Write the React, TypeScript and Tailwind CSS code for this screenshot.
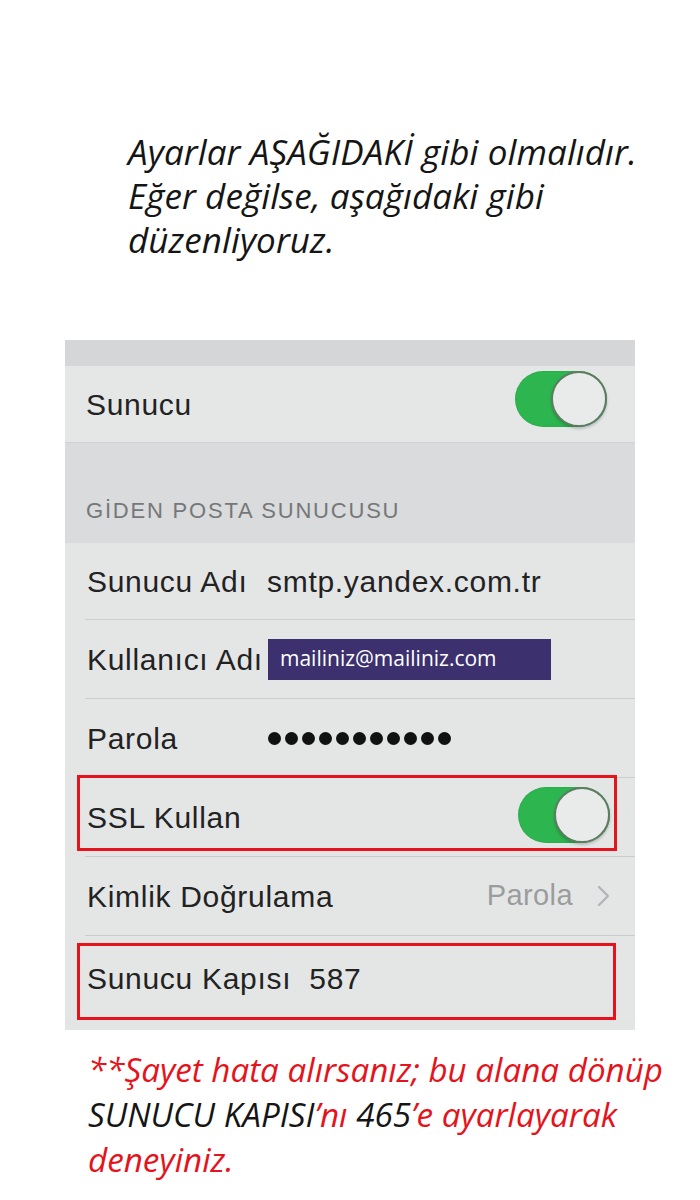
import React from "react";

const rowText = "font-['Liberation_Sans',Arial,sans-serif] text-[30px] tracking-[0.7px] text-[#222222]";

function Toggle() {
  return (
    <div className="flex h-[56px] w-[92px] justify-end rounded-full bg-[#2db64f] shadow-[inset_0_0_2px_rgba(0,0,0,0.15)]">
      <div className="h-[56px] w-[56px] rounded-full border-[2px] border-[#5d7d63] bg-[#e8ebea] shadow-[0_2px_3px_rgba(0,0,0,0.2)]" />
    </div>
  );
}

function Chevron() {
  return (
    <svg width="13" height="22" viewBox="0 0 13 22" fill="none">
      <path d="M2 2 L11 11 L2 20" stroke="#b3b5b6" strokeWidth="2.4" strokeLinecap="round" strokeLinejoin="round" />
    </svg>
  );
}

function Row({
  children,
  height = "h-[79px]",
  divider = true,
  highlight,
}: {
  children: React.ReactNode;
  height?: string;
  divider?: boolean;
  highlight?: string;
}) {
  return (
    <div className="relative">
      <div
        className={`ml-[20px] flex items-center pl-[2px] ${height} ${
          divider ? "border-b border-[#cbcdce]" : ""
        }`}
      >
        {children}
      </div>
      {highlight && <div className={`pointer-events-none absolute border-[3px] border-[#e5131b] ${highlight}`} />}
    </div>
  );
}

export default function App() {
  return (
    <div className="h-[1200px] w-[700px] overflow-hidden bg-white">
      {/* intro note */}
      <div className="pl-[128px] pt-[130px] font-['Open_Sans',sans-serif] text-[35px] italic leading-[44px] tracking-[0.1px] text-[#151515]">
        <p>Ayarlar AŞAĞIDAKİ gibi olmalıdır.</p>
        <p>Eğer değilse, aşağıdaki gibi</p>
        <p>düzenliyoruz.</p>
      </div>

      {/* settings screen */}
      <div className="ml-[65px] mt-[78px] h-[690px] w-[570px] overflow-hidden bg-[#e3e5e5]">
        <div className="h-[26px] bg-[#d4d6d7]" />
        <div className="flex h-[77px] items-center justify-between border-b border-[#cfd1d2] bg-[#e5e7e7] pl-[21px] pr-[28px]">
          <span className={rowText}>Sunucu</span>
          <div className="-mt-[10px]">
            <Toggle />
          </div>
        </div>
        <div className="flex h-[100px] items-end bg-[#d9dbdc] pb-[16px] pl-[21px]">
          <span className="font-['Liberation_Sans',Arial,sans-serif] text-[22px] tracking-[1.8px] text-[#767778]">
            GİDEN POSTA SUNUCUSU
          </span>
        </div>

        <div className="bg-[#e4e6e6]">
          <Row height="h-[77px]">
            <span className={`w-[180px] shrink-0 whitespace-nowrap ${rowText}`}>Sunucu Adı</span>
            <span className={rowText}>smtp.yandex.com.tr</span>
          </Row>
          <Row>
            <span className={`w-[181px] shrink-0 whitespace-nowrap ${rowText}`}>Kullanıcı Adı</span>
            <span className="flex h-[41px] w-[283px] items-center bg-[#3c316e] pl-[12px] font-['Open_Sans',sans-serif] text-[21px] text-white">
              mailiniz@mailiniz.com
            </span>
          </Row>
          <Row>
            <span className={`w-[181px] shrink-0 whitespace-nowrap ${rowText}`}>Parola</span>
            <div className="flex gap-[4px]">
              {Array.from({ length: 11 }).map((_, i) => (
                <div key={i} className="h-[13px] w-[13px] rounded-full bg-[#111111]" />
              ))}
            </div>
          </Row>
          <Row highlight="left-[12px] right-[18px] -top-[3px] h-[76px]">
            <div className="flex w-full items-center justify-between pr-[25px]">
              <span className={rowText}>SSL Kullan</span>
              <div className="mt-[-4px]">
                <Toggle />
              </div>
            </div>
          </Row>
          <Row>
            <div className="flex w-full items-center justify-between pr-[25px]">
              <span className={rowText}>Kimlik Doğrulama</span>
              <div className="flex items-center gap-[24px]">
                <span className="font-['Liberation_Sans',Arial,sans-serif] text-[29px] tracking-[0.4px] text-[#9b9c9d]">
                  Parola
                </span>
                <Chevron />
              </div>
            </div>
          </Row>
          <Row height="h-[84px]" divider={false} highlight="left-[12px] right-[19px] top-[7px] h-[77px]">
            <span className={`whitespace-pre ${rowText}`}>Sunucu Kapısı  587</span>
          </Row>
        </div>
      </div>

      {/* footnote */}
      <div className="mt-[17px] pl-[88px] font-['Open_Sans',sans-serif] text-[33.2px] italic leading-[45px] text-[#e5131b]">
        <p>**Şayet hata alırsanız; bu alana dönüp</p>
        <p>
          <span className="text-[#151515]">SUNUCU KAPISI</span>’nı <span className="text-[#151515]">465</span>’e ayarlayarak
        </p>
        <p>deneyiniz.</p>
      </div>
    </div>
  );
}
